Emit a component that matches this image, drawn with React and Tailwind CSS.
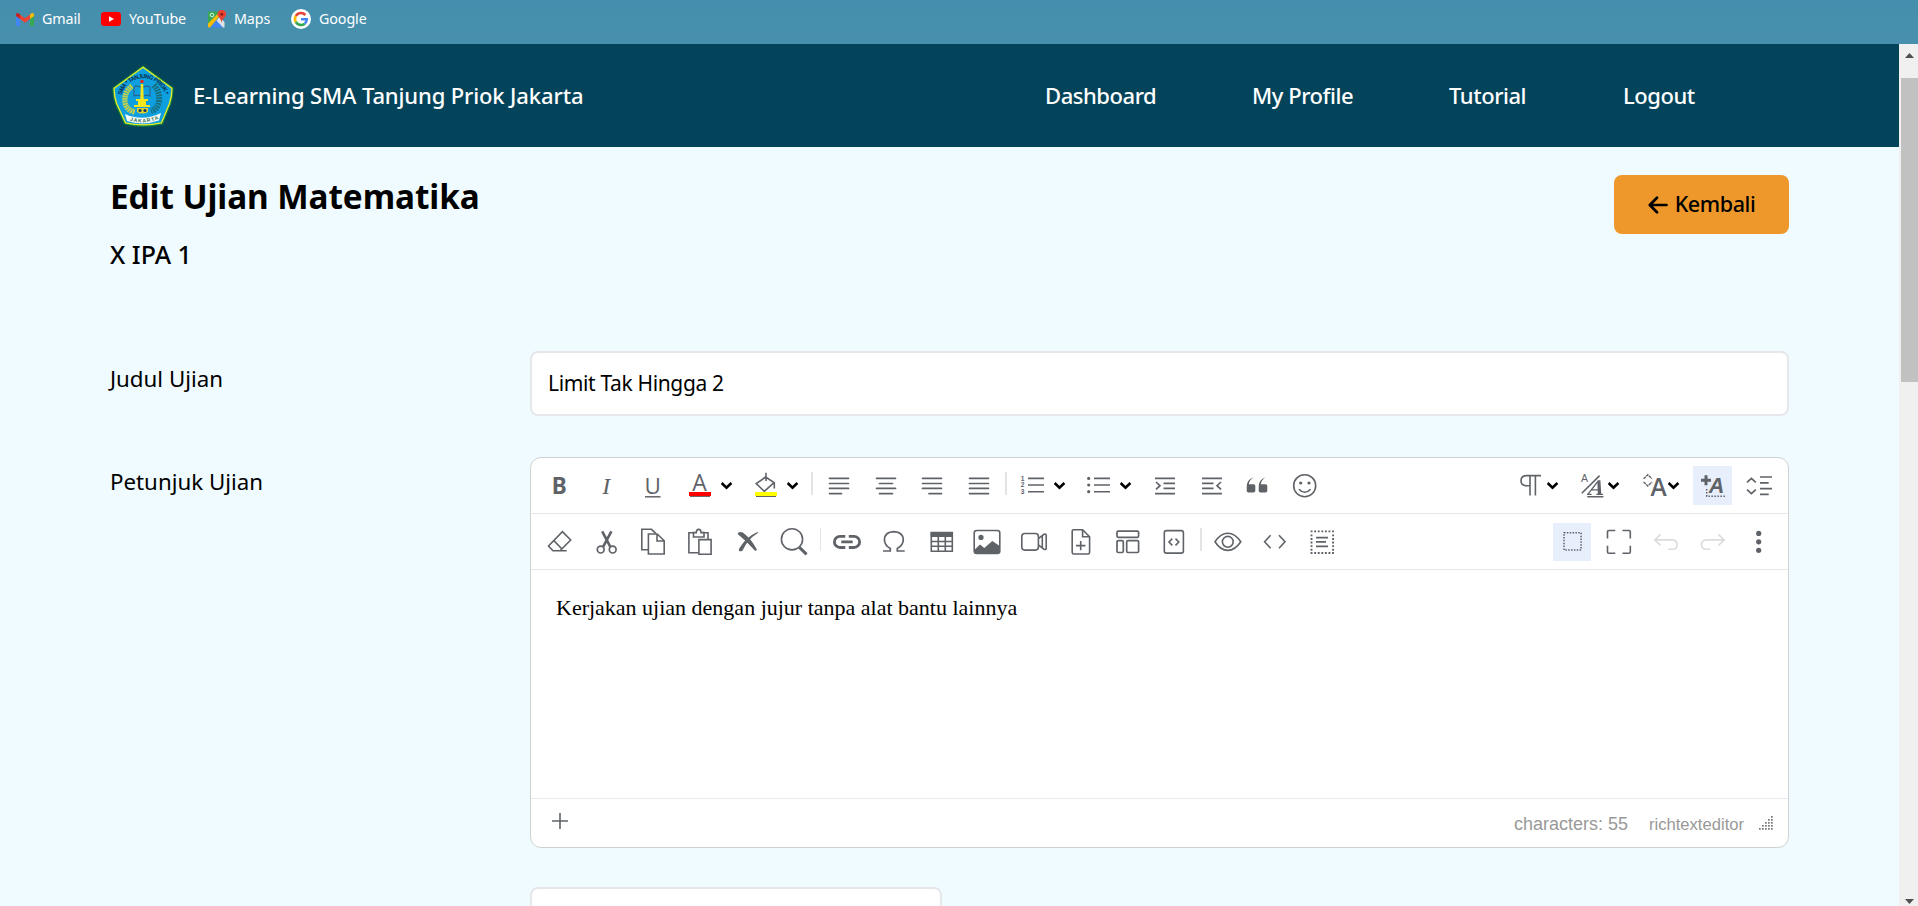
import React from "react";

const G = "#5f6368";

function Icon({ m = "", color = G, sw = 1.5, children }) {
  return (
    <svg className={`h-7 w-7 shrink-0 overflow-visible ${m}`} viewBox="0 0 28 28" fill="none" stroke={color} strokeWidth={sw}>
      {children}
    </svg>
  );
}

function Chevron({ m }) {
  return (
    <svg className={`h-7 w-3 shrink-0 ${m}`} viewBox="0 0 12 28" fill="none" stroke="#000" strokeWidth="2.6">
      <path d="M.6 11 L5.5 15.6 L10.4 11" />
    </svg>
  );
}

function Sep({ m }) {
  return <span className={`h-[23px] shrink-0 bg-[#e4e4e4] ${m}`} />;
}

function Glyph({ x, y, size, family = "Open Sans, sans-serif", weight = 400, style = "normal", children }) {
  return (
    <text x={x} y={y} fontSize={size} fontFamily={family} fontWeight={weight} fontStyle={style} fill={G} stroke="none" textAnchor="middle">
      {children}
    </text>
  );
}

function Bookmark({ m, label, gap, children }) {
  return (
    <a className={`flex items-center ${gap} ${m}`}>
      {children}
      <span>{label}</span>
    </a>
  );
}

function BookmarksBar() {
  return (
    <div className="flex h-11 items-start bg-gradient-to-b from-[#448fad] to-[#4890ad] pt-[8px] text-[14.3px] leading-[21px] tracking-[-0.1px] text-white">
      <Bookmark m="ml-4 w-[85px]" gap="gap-2" label="Gmail">
        <svg className="h-[18px] w-[18px]" viewBox="0 0 18 18">
          <path d="M0 6 L4 9 V16 H1.2 Q0 16 0 15Z" fill="#4285f4" />
          <path d="M14 9 L18 6 V15 Q18 16 17 16 H14Z" fill="#34a853" />
          <path d="M14 4.5 L15.5 3.3 Q18 2.2 18 5 V6 L14 9Z" fill="#fbbc04" />
          <path d="M4 4.5 L9 8.3 L14 4.5 V9 L9 12.8 L4 9Z" fill="#ea4335" />
          <path d="M0 6 V5 Q0 2.2 2.5 3.3 L4 4.5 V9Z" fill="#c5221f" />
        </svg>
      </Bookmark>
      <Bookmark m="w-[107px]" gap="gap-2" label="YouTube">
        <svg className="h-[18px] w-5" viewBox="0 0 20 18">
          <rect x="0" y="2" width="20" height="14" rx="3.2" fill="#f00" />
          <path d="M8 6.2 L13 9 L8 11.8Z" fill="#fff" />
        </svg>
      </Bookmark>
      <Bookmark m="w-[83px]" gap="gap-2" label="Maps">
        <svg className="h-[18px] w-[18px]" viewBox="0 0 18 18">
          <path d="M0 3 Q0 1.5 1.5 1.5 H12 L0 14Z" fill="#34a853" />
          <path d="M0 13.5 L10 3.5 L11.5 6 L2 17.5 H1 Q0 17.5 0 16.5Z" fill="#fbbc04" />
          <path d="M2.5 17.5 L8.5 10.5 L15 17.5Z" fill="#4285f4" />
          <path d="M8.5 10.5 L11.5 7 L16.5 12 V17.5 H15Z" fill="#dfe3e8" />
          <circle cx="4" cy="5" r="1.8" fill="none" stroke="#dff3e4" strokeWidth="1" />
          <path d="M13.5 12.5 Q13 9.5 10.8 7 A4.2 4.2 0 1 1 16.8 7 Q14.2 9.5 13.5 12.5Z" fill="#ea4335" />
          <circle cx="13.8" cy="4.3" r="1.5" fill="#8c1d18" />
        </svg>
      </Bookmark>
      <Bookmark m="" gap="gap-2" label="Google">
        <svg className="h-5 w-5" viewBox="0 0 20 20" fill="none" strokeWidth="2.6">
          <circle cx="10" cy="10" r="10" fill="#fff" />
          <path d="M14.4 6 A6 6 0 0 0 4.8 7" stroke="#ea4335" />
          <path d="M4.8 7 A6 6 0 0 0 4.8 13" stroke="#fbbc05" />
          <path d="M4.8 13 A6 6 0 0 0 13.7 14.7" stroke="#34a853" />
          <path d="M10 10.3 H15.8 A6 6 0 0 1 13.7 14.7" stroke="#4285f4" />
        </svg>
      </Bookmark>
    </div>
  );
}

function SchoolCrest() {
  return (
    <svg className="h-[62px] w-[62px] shrink-0" viewBox="0 0 62 62">
      <defs>
        <path id="crest-arc" d="M9.5 30 A22.5 22.5 0 0 1 53 30" />
        <path id="crest-ribbon" d="M14 54 Q31 61 48 53.5" />
      </defs>
      <path d="M31 1.5 L60.5 23 Q61 30 58 39 L50 58.5 Q31 63 13 58.5 L4 39 Q1 30 1.5 23Z" fill="#0d9fe0" stroke="#15813a" strokeWidth="2" strokeLinejoin="round" />
      <path d="M31 2.2 L59.8 23.3 Q60.2 30 57.4 38.7 L49.5 57.8 Q31 62 13.5 57.8 L4.7 38.7 Q1.8 30 2.2 23.3Z" fill="none" stroke="#e8ee2c" strokeWidth="1.3" strokeLinejoin="round" />
      <text fontSize="6" fontWeight="700" fontFamily="Liberation Sans, sans-serif" fill="#0a2b4a">
        <textPath href="#crest-arc" textLength="58" lengthAdjust="spacingAndGlyphs">SMA * TANJUNG PRIOK *</textPath>
      </text>
      <path d="M20 21 Q12 27 13 37 Q14 45 23 47" fill="none" stroke="#c3d24a" strokeWidth="5.4" strokeDasharray="1.8 .6" />
      <path d="M42 20 Q48 27 47 36 Q46 44 39 46" fill="none" stroke="#1b6f7c" strokeWidth="6" strokeDasharray="1.8 .9" />
      <path d="M22 22 Q26 20 30 23 Q34 20 38 22 V31 Q34 29 30 32 Q26 29 22 31Z" fill="none" stroke="#2a668c" strokeWidth="1.2" />
      <path d="M28.8 19 H31.2 L31.7 34 H36 V36 H34 V40 H38 V42 H22 V40 H26 V36 H24 V34 H28.3Z" fill="#f4e51c" />
      <circle cx="30" cy="16.5" r="1.8" fill="#e02a1e" />
      <path d="M25 43 H36 V47 Q30 50 25 47Z" fill="#e0d029" />
      <circle cx="28" cy="45.5" r="1.6" fill="#123d63" />
      <circle cx="33" cy="45.5" r="1.6" fill="#123d63" />
      <path d="M13 49 Q31 57 49 48 L47 55.5 Q31 61 15 56Z" fill="#f5faf6" />
      <text fontSize="5" fontWeight="700" fontFamily="Liberation Sans, sans-serif" fill="#2a6a4c">
        <textPath href="#crest-ribbon" startOffset="4" textLength="29">JAKARTA</textPath>
      </text>
    </svg>
  );
}

function Navbar() {
  return (
    <nav className="flex h-[103px] items-center bg-[#03445b] pl-[112px] text-[22px] font-medium tracking-[-0.45px] text-white">
      <SchoolCrest />
      <span className="ml-[19px] w-[852px] whitespace-nowrap tracking-[-0.13px]">E-Learning SMA Tanjung Priok Jakarta</span>
      <span className="w-[207px]">Dashboard</span>
      <span className="w-[197px]">My Profile</span>
      <span className="w-[174px]">Tutorial</span>
      <span>Logout</span>
    </nav>
  );
}

const ROW_Y = [6.3, 11.5, 16.4, 21.6];

function AlignIcon({ m, spans }) {
  return (
    <Icon m={m} sw={1.7}>
      {spans.map(([a, b], i) => (
        <path key={i} d={`M${a} ${ROW_Y[i]} H${b}`} strokeLinecap="round" />
      ))}
    </Icon>
  );
}

function FormatToolbar() {
  return (
    <div className="-mx-[2px] flex h-[56px] items-start border-b border-[#e8e8e8] px-[2px] pt-[14px]">
      <Icon m="ml-[14px]"><Glyph x={14.3} y={22} size={22.5} weight={700} family="Noto Sans, sans-serif">B</Glyph></Icon>
      <Icon m="ml-[19px]"><Glyph x={14.3} y={22} size={24} style="italic" family="Liberation Serif, serif">I</Glyph></Icon>
      <Icon m="ml-[18px]">
        <Glyph x={14.6} y={21.5} size={22.5}>U</Glyph>
        <path d="M7 24.8 H22.5" />
      </Icon>
      <Icon m="ml-[20px]">
        <Glyph x={13.4} y={18.5} size={23}>A</Glyph>
        <path d="M4 24.2 H24" />
        <rect x="3" y="20" width="22" height="4" fill="#f00" stroke="none" />
      </Icon>
      <Chevron m="ml-[7px]" />
      <Icon m="ml-[19px]" sw={1.6}>
        <path d="M13.7 5 L4.2 11.6 L12.3 19.3 L22 10.6Z M14 .8 V9 M22.3 10.6 V16.5" />
        <path d="M4 24.2 H24" />
        <rect x="3" y="20" width="22" height="4" fill="#ff0" stroke="none" />
      </Icon>
      <Chevron m="ml-[7px]" />
      <Sep m="ml-[12px] w-[2px]" />
      <AlignIcon m="ml-[12px]" spans={[[4.5, 23.5], [4.5, 23.5], [4.5, 23.5], [4.5, 16.5]]} />
      <AlignIcon m="ml-[19px]" spans={[[4.5, 23.5], [7.5, 20.5], [4.5, 23.5], [7.5, 20.5]]} />
      <AlignIcon m="ml-[18px]" spans={[[4.5, 23.5], [4.5, 23.5], [4.5, 23.5], [11, 23.5]]} />
      <AlignIcon m="ml-[19px]" spans={[[4.5, 23.5], [4.5, 23.5], [4.5, 23.5], [4.5, 23.5]]} />
      <Sep m="ml-[12px] w-[2px]" />
      <Icon m="ml-[11px]" sw={1.6}>
        <path d="M10 6.4 H26 M10 13 H26 M10 19.7 H26" />
        <Glyph x={4.7} y={8.6} size={6.6} weight={700} family="Liberation Sans, sans-serif">1</Glyph>
        <Glyph x={4.7} y={15.4} size={6.6} weight={700} family="Liberation Sans, sans-serif">2</Glyph>
        <Glyph x={4.7} y={22} size={6.6} weight={700} family="Liberation Sans, sans-serif">3</Glyph>
      </Icon>
      <Chevron m="ml-[8px]" />
      <Icon m="ml-[18px]" sw={1.6}>
        <path d="M10 6.4 H26 M10 13 H26 M10 19.7 H26" />
        <g fill={G} stroke="none">
          <circle cx="4.7" cy="6.4" r="1.6" />
          <circle cx="4.7" cy="13" r="1.6" />
          <circle cx="4.7" cy="19.7" r="1.6" />
        </g>
      </Icon>
      <Chevron m="ml-[8px]" />
      <Icon m="ml-[19px]" sw={1.7}>
        <path d="M4 6.3 H24 M12.5 11.3 H24 M12.5 16.3 H24 M4 21.6 H24 M5 10 L9 13.7 L5 17.4" />
      </Icon>
      <Icon m="ml-[19px]" sw={1.7}>
        <path d="M4 6.3 H24 M4 11.3 H15.5 M4 16.3 H15.5 M4 21.6 H24 M23 10 L19 13.7 L23 17.4" />
      </Icon>
      <Icon m="ml-[17px]">
        <g fill={G} stroke="none">
          <path d="M10.6 5.2 Q3.7 7.4 3.7 15 V18.8 Q3.7 20.5 5.4 20.5 H10.6 Q12.3 20.5 12.3 18.8 V14 Q12.3 12.3 10.6 12.3 H5.8 Q6.2 8 10.6 5.2Z" />
          <path d="M22.6 5.2 Q15.7 7.4 15.7 15 V18.8 Q15.7 20.5 17.4 20.5 H22.6 Q24.3 20.5 24.3 18.8 V14 Q24.3 12.3 22.6 12.3 H17.8 Q18.2 8 22.6 5.2Z" />
        </g>
      </Icon>
      <Icon m="ml-[20px]" sw={1.6}>
        <circle cx="13.7" cy="13.7" r="11" />
        <circle cx="9.7" cy="11" r="1.6" fill={G} stroke="none" />
        <circle cx="18" cy="11" r="1.6" fill={G} stroke="none" />
        <path d="M8 17.2 Q13.7 23.4 19.6 17.2" />
      </Icon>

      <Icon m="ml-auto" sw={1.6}>
        <path d="M24 3.6 H9.5 Q4 3.8 4 8.7 Q4 13.6 9.5 13.8 H13 M13 3.6 V23.6 M18.4 3.6 V23.6" />
      </Icon>
      <Chevron m="ml-[2px]" />
      <Icon m="ml-[20px]" sw={1.6}>
        <Glyph x={5.4} y={9.8} size={10.5} family="Liberation Sans, sans-serif">A</Glyph>
        <path d="M20.6 3.6 L2.8 21.2 M8.3 24.8 H24.4" />
        <path d="M8.8 22.4 L19.2 9 H20.8 L21.6 22.4 M12.6 17.8 H20.6 M8 22.4 H12.6 M17.4 22.4 H24" strokeWidth="1.3" />
        <path d="M19.6 10 L20 22.2" strokeWidth="2.4" />
      </Icon>
      <Chevron m="ml-[1px]" />
      <Icon m="ml-[21px]" sw={1.4}>
        <path d="M2.6 6.8 L6.8 2.8 L11 6.8 M2.6 10 L6.8 14 L11 10" strokeDasharray="3 .6" />
        <Glyph x={17.5} y={24.4} size={24.5} weight={600}>A</Glyph>
      </Icon>
      <Chevron m="-ml-[1px]" />
      <span className="-mt-[6px] ml-[13px] h-[39px] w-[39px] shrink-0 bg-[#e8effc]">
        <svg className="h-[39px] w-[39px]" viewBox="0 0 39 39" fill="none" stroke={G}>
          <path d="M13 9.3 V19.3 M8 14.3 H18" strokeWidth="3" />
          <path d="M13.7 23 V30.3 H32" strokeWidth="1.5" strokeDasharray="1.5 1.5" />
          <Glyph x={23.6} y={27.3} size={21.5} weight={700} style="italic" family="Liberation Sans, sans-serif">A</Glyph>
        </svg>
      </span>
      <Icon m="ml-[14px] mr-[14px]" sw={1.7}>
        <path d="M1 10.4 L5.4 6.4 L9.8 10.4 M1 17.6 L5.4 21.6 L9.8 17.6" />
        <path d="M14 5 H26 M14 10.9 H22.7 M14 16.7 H26 M14 22.4 H22.7" />
      </Icon>
    </div>
  );
}

function InsertToolbar() {
  return (
    <div className="flex h-[56px] items-start border-b border-[#e8e8e8] pt-[13px]">
      <Icon m="ml-[14px]" sw={1.6}>
        <path d="M17.4 4.6 L25.7 13 L15 23.8 H8 L3.5 19Z M8.6 13.4 L17 22 M15 23.8 H21.7" />
      </Icon>
      <Icon m="ml-[20px]" sw={1.7}>
        <circle cx="7.7" cy="22.6" r="3.4" />
        <circle cx="19.7" cy="22.6" r="3.4" />
        <path d="M10.2 19.6 L18.4 4.4 M17.2 19.6 L9.2 4.4" strokeWidth="2.6" />
      </Icon>
      <Icon m="ml-[18px]" sw={1.6}>
        <path d="M9 22.8 H2.8 V2.3 H12.5 L16.8 6.4" />
        <path d="M9.4 7 H18.2 L25.2 13.8 V27 H9.4Z M18 7 V14 H25" />
      </Icon>
      <Icon m="ml-[19px]" sw={1.6}>
        <path d="M12.5 25.8 H2.9 V5.8 H7.5 M17.6 5.8 H22 V12" />
        <path d="M7.5 10 V5.6 H10.3 Q10.4 2.4 12.7 2.4 Q15 2.4 15 5.6 H18 V10Z" />
        <path d="M12.9 12.6 H25.1 V27.2 H12.9Z" fill="#fff" />
      </Icon>
      <Icon m="ml-[20px]">
        <path d="M3.6 7 L4.8 5.2 Q7 4.4 8.8 5.6 Q17.5 12 22.8 22.6 L21.8 24 Q12.5 14.2 3.6 7Z M23.8 4.8 V6 Q13.5 12.5 8.6 23.4 Q7 25 5 23.8 Q4.6 22.8 5.2 21.6 Q12 10 23.8 4.8Z" fill={G} stroke="none" fillRule="nonzero" />
        <path d="M14 14.5 L21.8 23" strokeWidth="2" />
      </Icon>
      <Icon m="ml-[18px]" sw={1.6}>
        <circle cx="12" cy="12.3" r="10.6" />
        <path d="M19.4 20.4 L26.6 27.3" strokeWidth="3" />
      </Icon>
      <Sep m="ml-[12px] mt-[1px] w-px" />
      <Icon m="ml-[12px]" sw={2.8}>
        <path d="M12.3 9.3 H7 A5.6 5.6 0 0 0 7 20.5 H12.3 M15.8 9.3 H21 A5.6 5.6 0 0 1 21 20.5 H15.8 M8.3 14.9 H19.7" />
      </Icon>
      <Icon m="ml-[19px]" sw={1.7}>
        <path d="M3 24 H10.3 V21.6 Q4.4 18.4 4.4 12.6 Q4.8 4.8 13.8 4.6 Q22.8 4.8 23.3 12.6 Q23.3 18.4 17.3 21.6 V24 H24.7" />
      </Icon>
      <Icon m="ml-[20px]" sw={1.6}>
        <path d="M3.3 5.5 H24.3 V24.2 H3.3Z M10.3 9 V24 M17.3 9 V24 M3.3 14.5 H24.3 M3.3 19.3 H24.3" />
        <path d="M2.6 5 H25 V10 H2.6Z" fill={G} stroke="none" />
      </Icon>
      <Icon m="ml-[17px]" sw={1.6}>
        <rect x="1.2" y="3.5" width="25.6" height="23" rx="2.5" />
        <circle cx="8" cy="10.4" r="2.6" fill={G} stroke="none" />
        <path d="M2 22.2 L7 17.6 L11.3 21 L19.3 14 L26 18.6 V26 H2Z" fill={G} stroke="none" />
      </Icon>
      <Icon m="ml-[19px]" sw={1.6}>
        <rect x="1.8" y="6.5" width="16.6" height="16.6" rx="3" />
        <path d="M18.6 11.4 L24 7.3 Q26.2 6.3 26.2 8.5 V21.2 Q26.2 23.2 24 22.2 L18.6 18.2 M22.3 9 V20.8" />
      </Icon>
      <Icon m="ml-[19px]" sw={1.6}>
        <path d="M6.5 2.7 H15.6 L22.6 9.8 V25.3 Q22.6 27 21 27 H6.8 Q5.2 27 5.2 25.3 V4 Q5.2 2.7 6.5 2.7Z M15.6 3 V9.8 H22.6 M13.7 14 V23.2 M9 18.6 H18.4" />
      </Icon>
      <Icon m="ml-[19px]" sw={1.7}>
        <rect x="3" y="4.1" width="21.6" height="6.2" rx="1.2" />
        <rect x="3" y="13.6" width="6.3" height="11.9" rx="1.2" />
        <rect x="12.7" y="13.6" width="11.9" height="11.9" rx="1.2" />
      </Icon>
      <Icon m="ml-[18px]" sw={1.6}>
        <rect x="4.3" y="3.6" width="19.1" height="22.5" rx="2.2" />
        <path d="M12.3 11.6 L9 15 L12.3 18.4 M15.5 11.6 L18.8 15 L15.5 18.4" />
      </Icon>
      <Sep m="ml-[12px] mt-[1px] w-[2px]" />
      <Icon m="ml-[12px]" sw={1.6}>
        <path d="M1 14.8 Q6.5 6.2 13.8 6.2 Q21 6.2 26.8 14.8 Q21 23.4 13.8 23.4 Q6.5 23.4 1 14.8Z" />
        <circle cx="13.8" cy="14.8" r="5.4" />
      </Icon>
      <Icon m="ml-[19px]" sw={1.6}>
        <path d="M9.6 8.2 L3.6 14.8 L9.6 21.3 M18 8.2 L24 14.8 L18 21.3" />
      </Icon>
      <Icon m="ml-[19px]" sw={1.6}>
        <path d="M2.6 4.4 H26 M2.6 26 H26" strokeWidth="1.9" strokeDasharray="1.9 1.68" />
        <path d="M3.5 7.4 V24 M25.1 7.4 V24" strokeWidth="1.9" strokeDasharray="1.9 1.7" />
        <path d="M8 10.6 H20 M8 14.9 H18 M8 19.3 H20" strokeWidth="1.8" />
      </Icon>

      <span className="-mt-[4px] ml-auto h-[38px] w-[38px] shrink-0 bg-[#e8effc]">
        <svg className="h-[38px] w-[38px]" viewBox="0 0 38 38" fill="none" stroke={G}>
          <rect x="11" y="9.8" width="17.1" height="17.1" strokeWidth="1.5" strokeDasharray="1.5 1.35" />
        </svg>
      </span>
      <Icon m="ml-[14px]" sw={1.6}>
        <path d="M2.5 11.5 V4.8 Q2.5 3.5 3.8 3.5 H10.3 M17.5 3.5 H24 Q25.3 3.5 25.3 4.8 V11.5 M25.3 18.7 V25 Q25.3 26.3 24 26.3 H17.5 M10.3 26.3 H3.8 Q2.5 26.3 2.5 25 V18.7" />
      </Icon>
      <Icon m="ml-[19px]" color="#dcdcdc" sw={1.6}>
        <path d="M8.6 7.4 L2.7 12.9 L8.6 18.3 M2.7 12.9 H20.5 Q25 13 25 17.6 Q25 22.3 20.5 22.3 H16.3" />
      </Icon>
      <Icon m="ml-[19px]" color="#dcdcdc" sw={1.6}>
        <path d="M19.4 7.4 L25.3 12.9 L19.4 18.3 M25.3 12.9 H7.5 Q2.5 13 2.5 17.6 Q2.5 22.3 7.5 22.3 H11.4" />
      </Icon>
      <Icon m="ml-[18px] mr-[15px]">
        <g fill={G} stroke="none">
          <circle cx="13.7" cy="6.4" r="2.6" />
          <circle cx="13.7" cy="14.8" r="2.6" />
          <circle cx="13.7" cy="23.3" r="2.6" />
        </g>
      </Icon>
    </div>
  );
}

const GRIP = [1, 2, 3, 4, 5].flatMap((col) => Array.from({ length: col }, (_, r) => [col, r]));

function StatusBar() {
  return (
    <div className="flex h-[49px] items-start border-t border-[#e9e9ef] font-['Liberation_Sans',sans-serif] text-[#999]">
      <svg className="ml-[20px] mt-[13px] h-[18px] w-[18px]" viewBox="0 0 18 18" stroke={G} strokeWidth="1.6">
        <path d="M9 1 V17 M1 9 H17" />
      </svg>
      <span className="ml-auto mt-[13px] text-[18px] leading-6">characters: 55</span>
      <span className="ml-[21px] mt-[14px] text-[16.6px] leading-6">richtexteditor</span>
      <svg className="ml-[15px] mr-[14px] mt-[17px] h-[15px] w-[15px]" viewBox="0 0 15 15" fill="#777">
        {GRIP.map(([c, r]) => (
          <rect key={`${c}-${r}`} x={c * 3 - 3} y={12 - r * 3} width="1.7" height="1.7" />
        ))}
      </svg>
    </div>
  );
}

function RichTextEditor() {
  return (
    <div className="flex h-[391px] w-[1259px] flex-col rounded-[11px] border border-[#cfd2d3] bg-white">
      <FormatToolbar />
      <InsertToolbar />
      <p className="flex-1 pl-[25px] pt-[24px] font-['Liberation_Serif',serif] text-[22px] leading-7 text-black">
        Kerjakan ujian dengan jujur tanpa alat bantu lainnya
      </p>
      <StatusBar />
    </div>
  );
}

function Scrollbar() {
  return (
    <div className="flex w-[19px] shrink-0 flex-col bg-[#f0f0f0]">
      <svg className="ml-[6px] mt-[9px] h-[5px] w-[9px]" viewBox="0 0 9 5" fill="#505050">
        <path d="M0 5 L4.5 0 L9 5Z" />
      </svg>
      <div className="ml-[2px] mt-[20px] h-[304px] bg-[#c1c1c1]" />
      <svg className="mb-[2px] ml-[6px] mt-auto h-[5px] w-[9px]" viewBox="0 0 9 5" fill="#505050">
        <path d="M0 0 L4.5 5 L9 0Z" />
      </svg>
    </div>
  );
}

function ExamForm() {
  return (
    <main className="pl-[110px] text-black">
      <header className="flex h-[204px] w-[1679px] items-start justify-between pt-[28px]">
        <div className="-mt-px">
          <h1 className="text-[33.3px] font-bold leading-[44px] tracking-[-0.07px]">Edit Ujian Matematika</h1>
          <h2 className="mt-[19px] text-[25px] font-medium leading-[34px]">X IPA 1</h2>
        </div>
        <button className="flex h-[59px] w-[175px] items-center justify-center gap-[7px] rounded-lg bg-[#ee982b] text-[21.5px] font-medium tracking-[-0.4px]">
          <svg className="h-[18px] w-5" viewBox="0 0 20 18" fill="none" stroke="#000" strokeWidth="2.7" strokeLinecap="round" strokeLinejoin="round">
            <path d="M9 1.8 L1.8 9 L9 16.2 M2.3 9 H18.5" />
          </svg>
          <span>Kembali</span>
        </button>
      </header>
      <section className="flex h-[106px] items-start">
        <label className="w-[420px] pt-[12px] text-[22.3px] leading-[32px]">Judul Ujian</label>
        <div className="flex h-[65px] w-[1259px] items-center rounded-lg border-2 border-[#e5e7eb] bg-white pl-[16px] text-[21px] tracking-[-0.35px]">
          Limit Tak Hingga 2
        </div>
      </section>
      <section className="flex h-[430px] items-start">
        <label className="w-[420px] pt-[9px] text-[22.3px] leading-[32px]">Petunjuk Ujian</label>
        <RichTextEditor />
      </section>
      <section className="flex">
        <div className="ml-[420px] h-[65px] w-[412px] shrink-0 rounded-lg border-2 border-[#e5e7eb] bg-white" />
      </section>
    </main>
  );
}

export default function App() {
  return (
    <div className="flex h-[906px] w-[1918px] flex-col overflow-hidden bg-[#effbff] font-['Noto_Sans','Open_Sans',sans-serif]">
      <BookmarksBar />
      <div className="flex min-h-0 flex-1">
        <div className="min-w-0 flex-1 overflow-hidden">
          <Navbar />
          <ExamForm />
        </div>
        <Scrollbar />
      </div>
    </div>
  );
}
